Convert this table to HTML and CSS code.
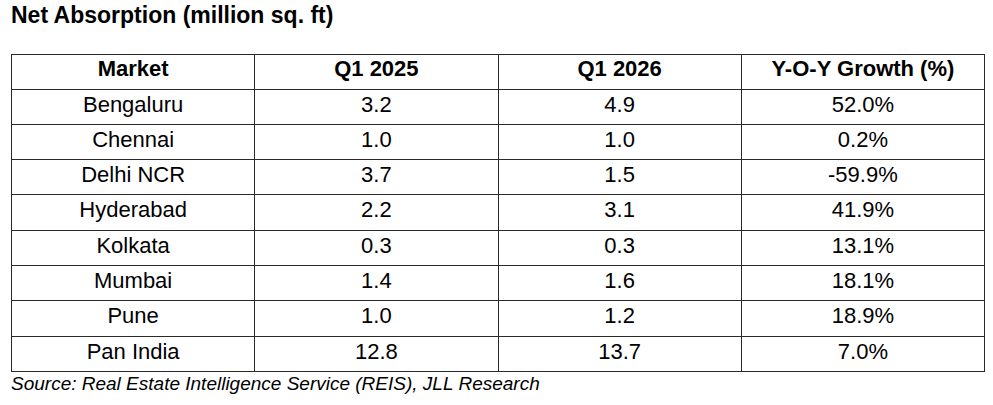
FILE: index.html
```html
<!DOCTYPE html>
<html>
<head>
<meta charset="utf-8">
<link rel="stylesheet" href="styles.css">
</head>
<body>
<div class="page">
  <h1 class="title">Net Absorption (million sq. ft)</h1>
  <table class="data">
    <thead>
      <tr><th>Market</th><th>Q1 2025</th><th>Q1 2026</th><th>Y-O-Y Growth (%)</th></tr>
    </thead>
    <tbody>
      <tr><td>Bengaluru</td><td>3.2</td><td>4.9</td><td>52.0%</td></tr>
      <tr><td>Chennai</td><td>1.0</td><td>1.0</td><td>0.2%</td></tr>
      <tr><td>Delhi NCR</td><td>3.7</td><td>1.5</td><td>-59.9%</td></tr>
      <tr><td>Hyderabad</td><td>2.2</td><td>3.1</td><td>41.9%</td></tr>
      <tr><td>Kolkata</td><td>0.3</td><td>0.3</td><td>13.1%</td></tr>
      <tr><td>Mumbai</td><td>1.4</td><td>1.6</td><td>18.1%</td></tr>
      <tr><td>Pune</td><td>1.0</td><td>1.2</td><td>18.9%</td></tr>
      <tr><td>Pan India</td><td>12.8</td><td>13.7</td><td>7.0%</td></tr>
    </tbody>
  </table>
  <p class="source">Source: Real Estate Intelligence Service (REIS), JLL Research</p>
</div>
</body>
</html>
```

FILE: styles.css
```css
html, body {
  margin: 0;
  padding: 0;
  background: #ffffff;
}

.page {
  font-family: "Liberation Sans", Arial, sans-serif;
  color: #000;
  padding: 0 8px 0 11px;
}

.title {
  margin: 0;
  padding-top: 2px;
  font-size: 23px;
  font-weight: bold;
  line-height: 26px;
  height: 54px;
  box-sizing: border-box;
}

.data {
  border-collapse: collapse;
  table-layout: fixed;
  width: 974px;
  margin: 0;
}

.data th,
.data td {
  border: 1px solid #2a2a2a;
  text-align: center;
  font-size: 22px;
  line-height: 25px;
  padding: 0;
}

.data th {
  font-weight: bold;
  height: 34.6px;
  vertical-align: top;
  padding-top: 1px;
  box-sizing: border-box;
}

.data td {
  height: 35.3px;
  box-sizing: border-box;
  vertical-align: top;
  padding-top: 2px;
}

.source {
  margin: 0;
  font-size: 19px;
  font-style: italic;
  line-height: 22px;
  padding-top: 1px;
}
```
